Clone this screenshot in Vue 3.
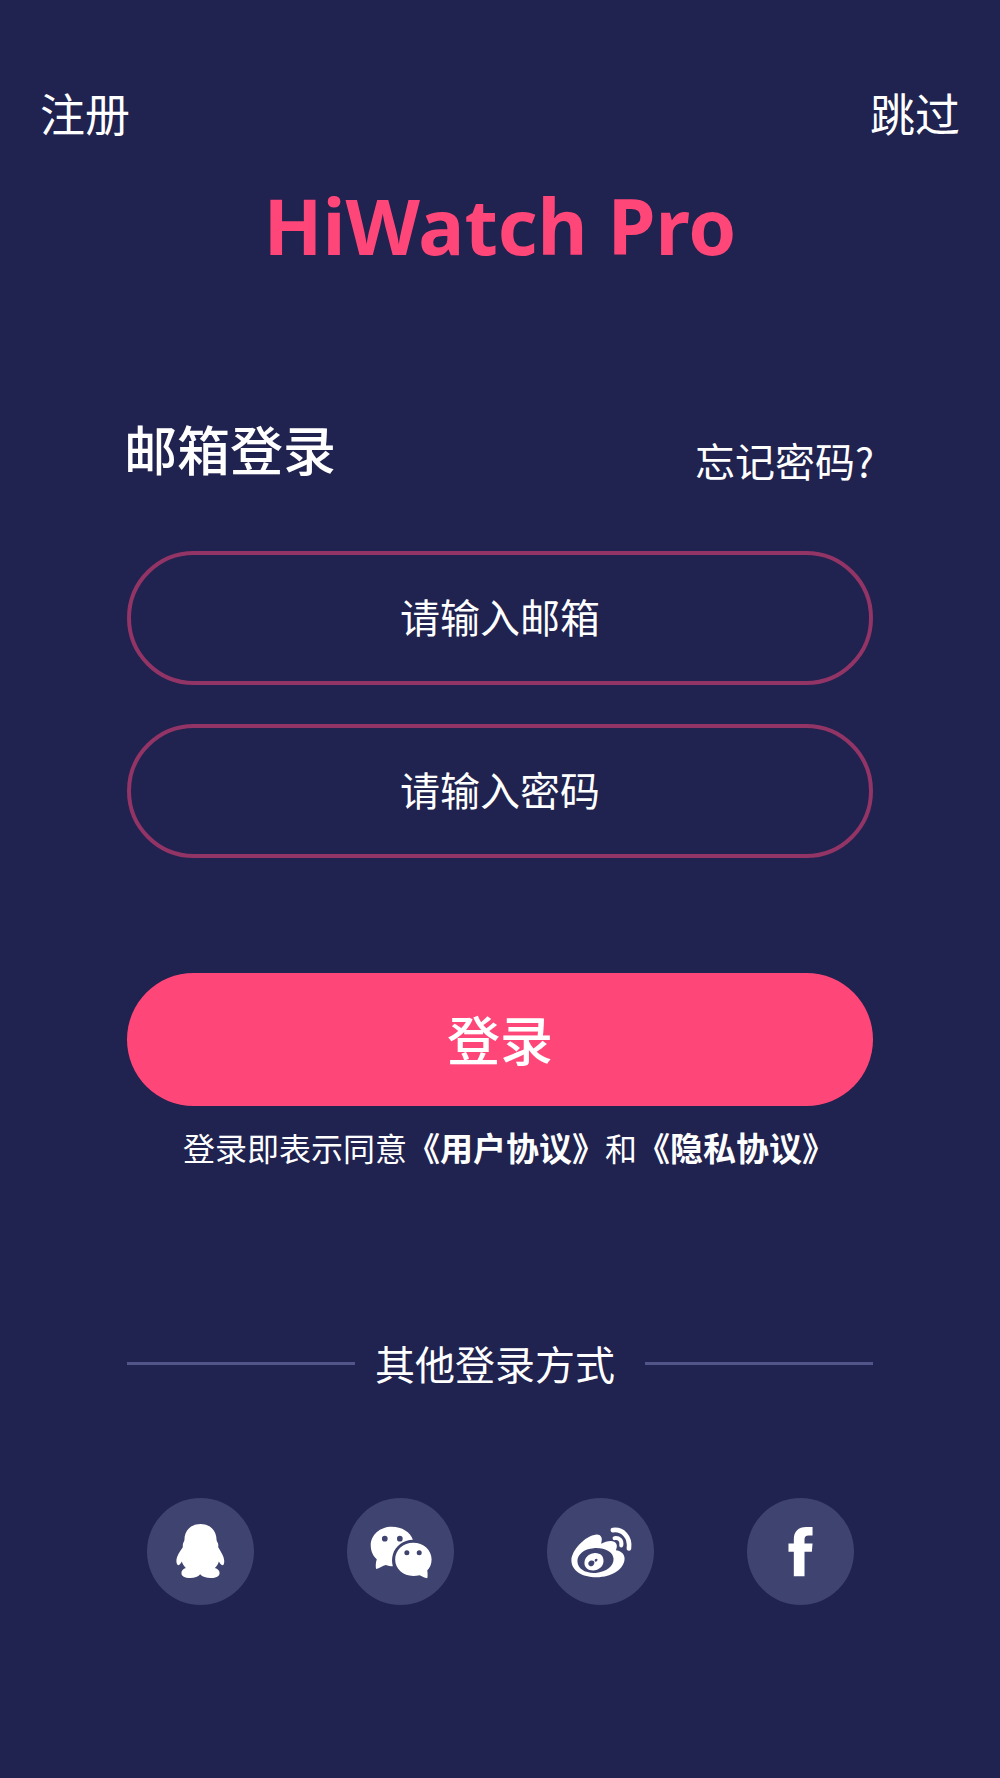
<template>
  <div class="login-page">
    <header class="top-bar">
      <a href="#register">注册</a>
      <a href="#skip">跳过</a>
    </header>

    <h1 class="brand">HiWatch Pro</h1>

    <form class="login-form" @submit.prevent>
      <div class="form-head">
        <h2>邮箱登录</h2>
        <a href="#forgot">忘记密码?</a>
      </div>

      <div class="fields">
        <input v-model="email" class="field" type="email" placeholder="请输入邮箱" aria-label="请输入邮箱">
        <input v-model="password" class="field" type="password" placeholder="请输入密码" aria-label="请输入密码">
      </div>

      <button class="btn-login" type="submit">登录</button>

      <p class="agreement">登录即表示同意<a href="#terms">《用户协议》</a>和<a href="#privacy">《隐私协议》</a></p>
    </form>

    <div class="divider">
      <span>其他登录方式</span>
    </div>

    <!-- 第三方登录 -->
    <div class="socials">
      <button v-for="item in socials" :key="item.name" type="button" class="social" :aria-label="item.name">
        <svg viewBox="20 24 320 320" aria-hidden="true">
          <path v-for="d in item.fills" :key="d" :d="d" fill="#fff" fill-rule="evenodd" />
          <path
            v-for="line in item.lines"
            :key="line.d"
            :d="line.d"
            :stroke-width="line.width"
            fill="none"
            stroke="#fff"
            stroke-linecap="round"
          />
        </svg>
      </button>
    </div>
  </div>
</template>

<script setup>
import { ref } from 'vue'

const email = ref('')
const password = ref('')

const socials = [
  {
    name: 'QQ',
    fills: [
      'M180 102C151 102 132 122 132 149C132 152 131 154 129 157C127 161 127 165 127 171C120 182 107 198 108 214C108 220 111 225 114 225C118 224 122 219 124 214C126 221 131 228 136 233C128 235 123 241 123 248C123 258 133 263 149 263C163 263 173 260 179 252C185 260 197 263 211 263C227 263 237 258 237 248C237 241 232 235 223 233C229 228 233 221 235 214C238 220 241 224 246 225C249 225 251 220 251 213C251 198 240 183 233 171C234 165 233 160 231 157C229 154 228 152 228 149C228 122 209 102 180 102Z'
    ]
  },
  {
    name: '微信',
    fills: [
      'M154 110C119 110 91 134 91 166C91 184 99 198 109 207C106 217 105 228 107 236C117 234 127 226 136 224C143 226 150 228 157 228C154 217 154 204 157 194C164 167 189 150 217 149C210 126 184 110 154 110ZM133 137A8.500 8.500 0 1 1 133 154A8.500 8.500 0 1 1 133 137ZM178 137A8.500 8.500 0 1 1 178 154A8.500 8.500 0 1 1 178 137Z',
      'M218 158C188 158 164 180 164 208C164 236 188 257 218 257C225 257 231 256 237 255C244 257 251 263 260 264C262 257 261 248 260 241C268 233 273 221 273 208C273 180 249 158 218 158ZM199 180A7.500 7.500 0 1 1 199 195A7.500 7.500 0 1 1 199 180ZM236 180A7.500 7.500 0 1 1 236 195A7.500 7.500 0 1 1 236 180Z'
    ]
  },
  {
    name: '微博',
    fills: [
      'M168 133C180 132 187 143 183 155L182 161C194 155 210 150 221 155C230 160 231 169 226 180C239 182 252 189 252 205C252 236 214 261 168 261C125 261 93 241 93 210C93 181 133 137 168 133ZM160 174C131 175 110 193 111 214C112 236 135 250 166 248C197 246 220 228 219 206C218 185 193 172 160 174Z',
      'M160 189C179 187 190 198 189 214C188 229 175 240 158 241C142 241 131 231 132 217C133 202 145 190 160 189ZM151 211C145 213 142 218 144 223C146 228 151 230 156 227C161 224 163 218 161 214C159 211 155 210 151 211ZM168 206C163 206 161 212 164 214C167 216 171 212 171 209C171 207 170 206 168 206Z'
    ],
    lines: [
      { d: 'M217 120C245 116 270 139 265 175', width: 14 },
      { d: 'M222 144C236 142 245 151 242 166', width: 12 }
    ]
  },
  {
    name: 'Facebook',
    fills: [
      'M216 111V136H204C196 136 192 140 192 148V160H216L214 185H192V258H160V185H144V160H160V148C160 124 174 111 197 111Z'
    ]
  }
]
</script>

<style>
body {
  margin: 0;
  background: #20224f;
}
</style>

<style scoped>
.login-page {
  min-height: 100vh;
  box-sizing: border-box;
  padding: 81px 0;
  background: #20224f;
  color: #fff;
  font-family: "Noto Sans CJK SC", sans-serif;
}

a {
  color: inherit;
  text-decoration: none;
}

/* 顶部 */
.top-bar {
  display: flex;
  justify-content: space-between;
  padding: 0 40px;
  font-size: 45px;
  line-height: 64px;
}

.brand {
  margin: 31px 0 0;
  text-align: center;
  color: #ff4678;
  font-family: "Noto Sans", "Open Sans", sans-serif;
  font-size: 77px;
  font-weight: 700;
  line-height: 100px;
}

/* 登录表单 */
.login-form {
  margin-top: 132px;
  padding: 0 127px;
}

.form-head {
  display: flex;
  justify-content: space-between;
  align-items: flex-end;
  margin: 0 -1px 0 -3px;
}

.form-head h2 {
  margin: 0;
  font-size: 53px;
  font-weight: 500;
  line-height: 80px;
}

.form-head a {
  font-size: 40px;
  line-height: 56px;
}

.fields {
  display: flex;
  flex-direction: column;
  gap: 39px;
  margin-top: 63px;
}

.field {
  width: 100%;
  height: 134px;
  box-sizing: border-box;
  padding: 0 60px 4px;
  border: 4px solid #923466;
  border-radius: 67px;
  outline: none;
  background: transparent;
  color: #fff;
  font-family: inherit;
  font-size: 40px;
  text-align: center;
}

.field::placeholder {
  color: #fff;
  opacity: 1;
}

.btn-login {
  display: block;
  width: 100%;
  height: 133px;
  margin-top: 115px;
  padding: 0 0 4px;
  border: none;
  border-radius: 67px;
  background: #ff4678;
  color: #fff;
  font-family: inherit;
  font-size: 53px;
  font-weight: 500;
  cursor: pointer;
}

.agreement {
  margin: 17px 0 0;
  padding-left: 18px;
  text-align: center;
  font-size: 32px;
  line-height: 48px;
  white-space: nowrap;
}

.agreement a {
  font-size: 33px;
  font-weight: 700;
}

/* 分割线 */
.divider {
  display: flex;
  align-items: center;
  margin-top: 162px;
  padding: 0 127px;
  font-size: 40px;
  line-height: 60px;
}

.divider::before,
.divider::after {
  content: "";
  flex: 1;
  height: 3px;
  background: #51558a;
}

.divider span {
  margin: 0 30px 0 20px;
}

.socials {
  display: flex;
  justify-content: space-around;
  margin-top: 105px;
  padding: 0 100px;
}

.social {
  width: 107px;
  height: 107px;
  padding: 0;
  border: none;
  border-radius: 50%;
  background: #3f4370;
  cursor: pointer;
}

.social svg {
  display: block;
  width: 100%;
  height: 100%;
}
</style>
